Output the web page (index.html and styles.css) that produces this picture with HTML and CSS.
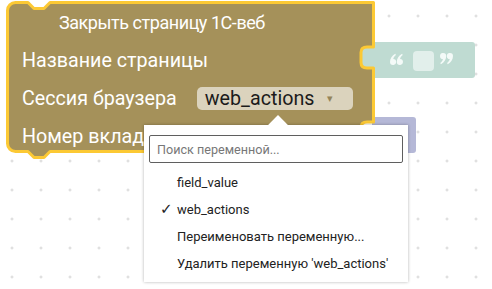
FILE: index.html
```html
<!DOCTYPE html>
<html lang="ru">
<head>
    <meta charset="UTF-8">
    <title>Закрыть страницу 1С-веб</title>
    <link rel="stylesheet" href="styles.css">
</head>
<body>
    <div class="workspace">

        <!-- текстовый блок, подключенный к "Название страницы" -->
        <div class="text-block">
            <svg class="quote" width="13" height="12" viewBox="0 0 13 12">
                <path d="M 3,12 A 3,3 0 0 1 0,9 C 0,5.5 2,2.5 5.3,0.8 L 5.9,2 C 4.3,3.2 3.4,4.5 3.3,6 A 3,3 0 0 1 3,12 Z"/>
                <path transform="translate(6.8,0)" d="M 3,12 A 3,3 0 0 1 0,9 C 0,5.5 2,2.5 5.3,0.8 L 5.9,2 C 4.3,3.2 3.4,4.5 3.3,6 A 3,3 0 0 1 3,12 Z"/>
            </svg>
            <span class="text-field"></span>
            <svg class="quote" width="13" height="12" viewBox="0 0 13 12">
                <g transform="rotate(180 6.5 6)">
                    <path d="M 3,12 A 3,3 0 0 1 0,9 C 0,5.5 2,2.5 5.3,0.8 L 5.9,2 C 4.3,3.2 3.4,4.5 3.3,6 A 3,3 0 0 1 3,12 Z"/>
                    <path transform="translate(6.8,0)" d="M 3,12 A 3,3 0 0 1 0,9 C 0,5.5 2,2.5 5.3,0.8 L 5.9,2 C 4.3,3.2 3.4,4.5 3.3,6 A 3,3 0 0 1 3,12 Z"/>
                </g>
            </svg>
        </div>

        <!-- блок, подключенный к "Номер вкладки" -->
        <div class="number-block"></div>

        <!-- основной блок -->
        <div class="block">
            <svg class="block-shape" width="380" height="165" viewBox="0 0 380 165">
                <path d="M 7.5,10.5 A 8,8 0 0 1 15.5,2.5 H 28 l 6,6 h 10 l 6,-6 H 373.5
                         V 47 H 367 Q 361,47 361,52.5 V 62.5 Q 361,68 367,68 H 373.5
                         V 122 H 367 Q 361,122 361,127.5 V 137.5 Q 361,143 367,143 H 373.5
                         V 151.5 H 50 l -6,6 h -10 l -6,-6 H 15.5 A 8,8 0 0 1 7.5,143.5 Z"
                      fill="#a5915a" stroke="#fcc934" stroke-width="3" stroke-linejoin="round"/>
            </svg>
            <div class="block-body">
                <div class="row title">Закрыть страницу 1С-веб</div>
                <div class="row">Название страницы</div>
                <div class="row">
                    Сессия браузера
                    <span class="field-dropdown">web_actions <span class="arrow">&#9662;</span></span>
                </div>
                <div class="row">Номер вкладки</div>
            </div>
        </div>

        <!-- выпадающее меню переменных -->
        <div class="menu">
            <input class="search" type="text" placeholder="Поиск переменной...">
            <div class="menu-item">field_value</div>
            <div class="menu-item checked">web_actions</div>
            <div class="menu-item">Переименовать переменную...</div>
            <div class="menu-item">Удалить переменную 'web_actions'</div>
        </div>
    </div>
</body>
</html>
```

FILE: styles.css
```css
/* общие настройки */
body {
    margin: 0;
    font-family: Roboto, "Liberation Sans", sans-serif;
    background: #fff;
}

/* рабочая область с сеткой точек */
.workspace {
    position: relative;
    width: 492px;
    height: 289px;
    overflow: hidden;
    background-color: #fff;
    background-image: radial-gradient(circle, #d6d6d6 1px, transparent 1.3px);
    background-size: 29px 29px;
    background-position: -2.5px 1.5px;
}

/* основной блок */
.block {
    position: absolute;
    left: 0;
    top: 0;
    width: 380px;
    height: 165px;
}

.block-shape {
    position: absolute;
    left: 0;
    top: 0;
}

.block-body {
    position: relative;
    display: flex;
    flex-direction: column;
    padding: 3px 0 0 22px;
}

.row {
    display: flex;
    align-items: center;
    height: 38px;
    color: #fff;
    font-size: 19.7px;
}

.row.title {
    padding-left: 37px;
    font-size: 18px;
    letter-spacing: -0.45px;
}

/* поле выбора переменной */
.field-dropdown {
    display: inline-flex;
    align-items: center;
    justify-content: space-between;
    box-sizing: border-box;
    width: 156px;
    height: 23px;
    margin-left: 20px;
    padding: 0 20px 0 8px;
    background-color: #dbd3bd;
    border-radius: 5px;
    color: #1b1b1b;
    font-size: 19.7px;
}

.field-dropdown .arrow {
    color: #948459;
    font-size: 11px;
}

/* текстовый блок */
.text-block {
    position: absolute;
    left: 372px;
    top: 42px;
    width: 103px;
    height: 36px;
    display: flex;
    align-items: center;
    padding-left: 18px;
    box-sizing: border-box;
    background-color: #bfdbd2;
    border-radius: 0 3px 3px 0;
}

.text-block::before {
    content: "";
    position: absolute;
    left: -12px;
    top: 5px;
    width: 14px;
    height: 21px;
    background-color: #bfdbd2;
    border-radius: 6px 0 0 6px;
}

.quote {
    flex: none;
    margin-bottom: 3px;
    fill: #f4faf8;
}

.text-field {
    width: 21px;
    height: 20px;
    margin: 2px 6px 0 10px;
    background-color: #e2efeb;
    border-radius: 4px;
}

/* блок номера вкладки */
.number-block {
    position: absolute;
    left: 372px;
    top: 117px;
    width: 44px;
    height: 36px;
    background-color: #b5b8d7;
    border-radius: 0 3px 3px 0;
}

/* выпадающее меню */
.menu {
    position: absolute;
    left: 144px;
    top: 125px;
    width: 264px;
    height: 157px;
    box-sizing: border-box;
    padding: 10px 5px 0 5px;
    background-color: #fff;
    box-shadow: 0 0 3px rgba(0, 0, 0, 0.3);
}

.menu::before {
    content: "";
    position: absolute;
    left: 127px;
    top: -7px;
    width: 14px;
    height: 14px;
    background-color: #fff;
    transform: rotate(45deg);
}

.search {
    position: relative;
    display: block;
    box-sizing: border-box;
    width: 254px;
    height: 28px;
    margin: 0 0 6px 0;
    padding: 0 7px;
    border: 1px solid #5f5f5f;
    border-radius: 2px;
    font-family: Roboto, "Liberation Sans", sans-serif;
    font-size: 12.6px;
    color: #333;
    outline: none;
}

.search::placeholder {
    color: #777;
}

.menu-item {
    position: relative;
    height: 27px;
    line-height: 27px;
    padding-left: 28px;
    font-size: 13px;
    color: #222;
}

.menu-item.checked::before {
    content: "\2713";
    position: absolute;
    left: 11px;
    font-family: "DejaVu Sans", sans-serif;
    font-size: 15px;
}
```
